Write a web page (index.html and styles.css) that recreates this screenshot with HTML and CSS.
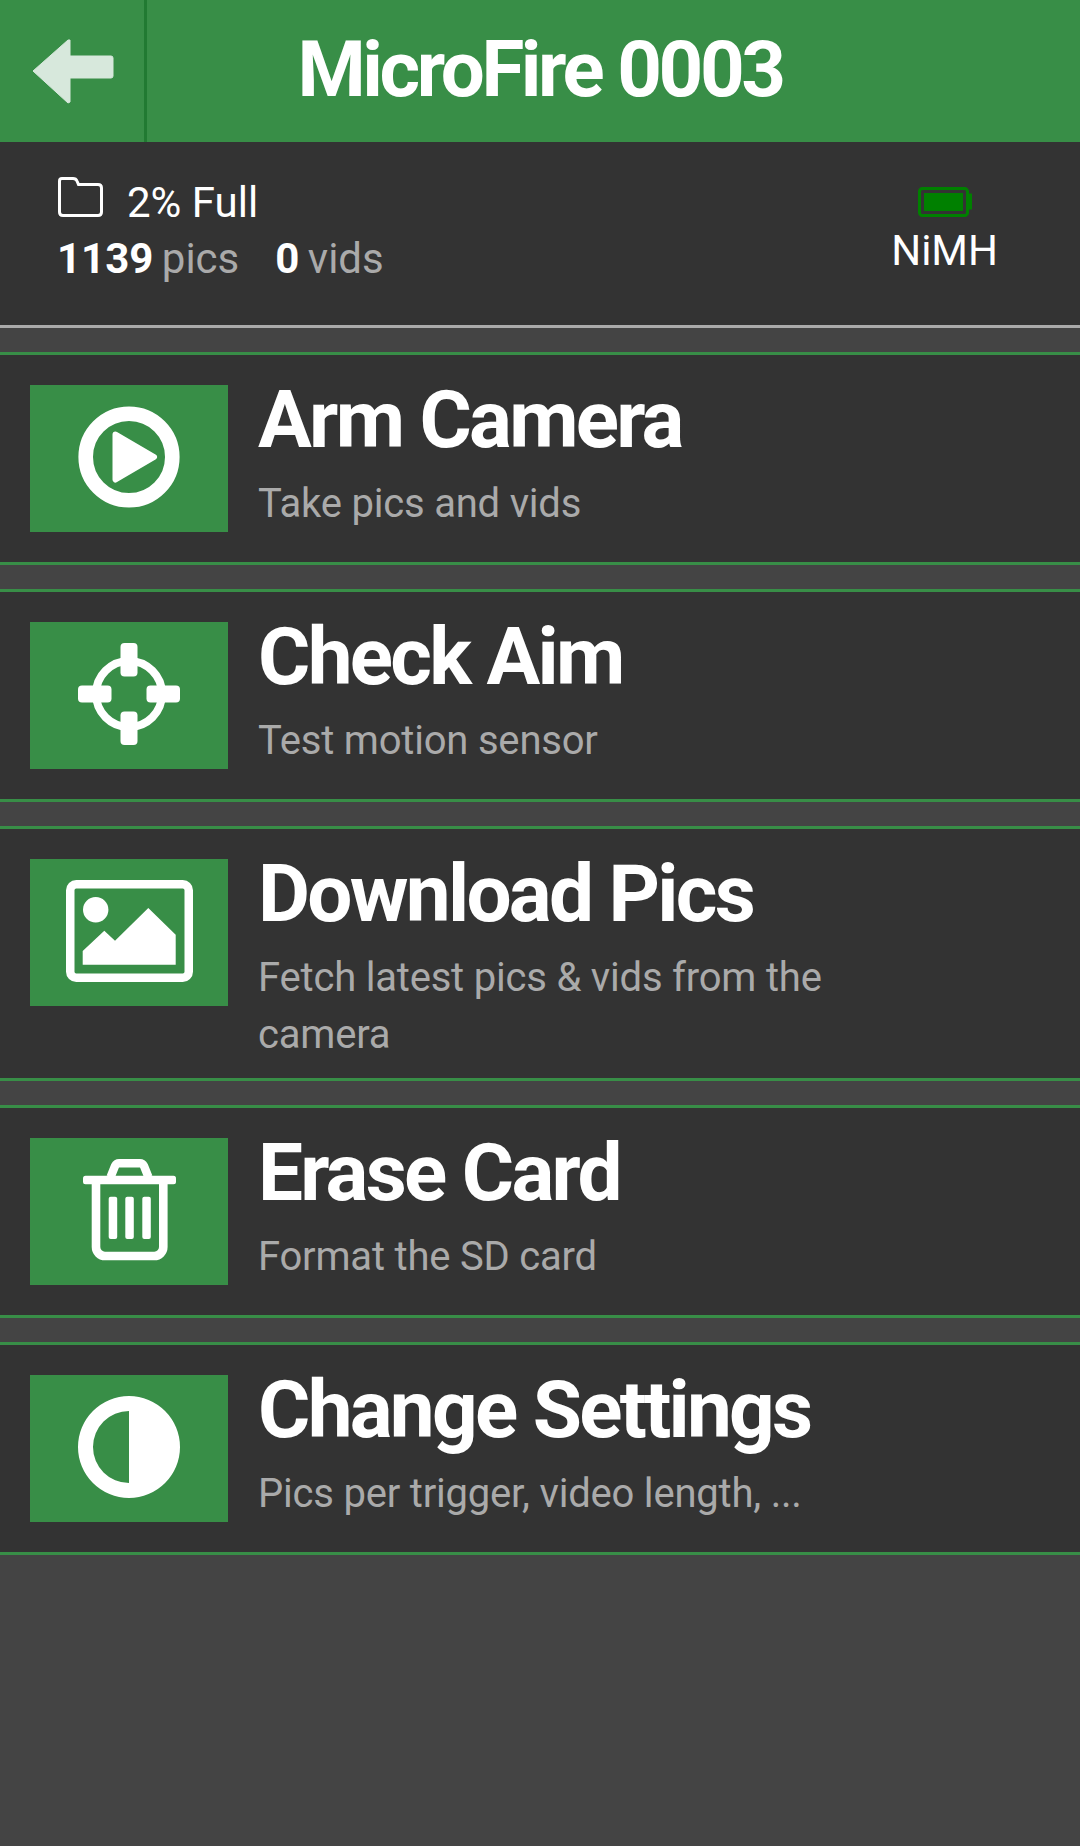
FILE: index.html

```html
<!DOCTYPE html>
<html lang="en">
<head>
    <meta charset="UTF-8">
    <meta name="viewport" content="width=device-width, initial-scale=1.0">
    <title>MicroFire 0003</title>
    <link rel="stylesheet" href="styles.css">
</head>
<body>
    <div class="header">
        <div class="back">
            <svg width="82" height="65" viewBox="0 0 82 65">
                <path d="M38 1 V17 H79 Q81 17 81 19 V37 Q81 39 79 39 H38 V63 L36 64 L1 32 L36 1 Z" fill="#d7e8dc" stroke="#d7e8dc" stroke-linejoin="round"/>
            </svg>
        </div>
        <h1 class="title">MicroFire 0003</h1>
    </div>

    <div class="info">
        <div class="info-left">
            <div class="storage">
                <svg class="folder" width="45" height="40" viewBox="0 0 45 40">
                    <path d="M4 1.5 H15 Q18 1.5 19 4 L20.5 7.5 H40 Q43.5 7.5 43.5 11 V35 Q43.5 38.5 40 38.5 H5 Q1.5 38.5 1.5 35 V4 Q1.5 1.5 4 1.5 Z" fill="none" stroke="#fff" stroke-width="3"/>
                </svg>
                <span class="storage-text">2% Full</span>
            </div>
            <div class="counts">
                <span class="count"><strong>1139</strong> pics</span>
                <span class="count"><strong>0</strong> vids</span>
            </div>
        </div>
        <div class="info-right">
            <svg width="54" height="30" viewBox="0 0 54 30">
                <rect x="1.5" y="1.5" width="48" height="27" rx="3" fill="none" stroke="#008000" stroke-width="3"/>
                <path d="M51 8 H52.5 V21 H51" fill="none" stroke="#008000" stroke-width="3"/>
                <rect x="6" y="6" width="39" height="18" fill="#008000"/>
            </svg>
            <div class="battery-type">NiMH</div>
        </div>
    </div>

    <div class="item">
        <div class="item-icon">
            <svg width="102" height="102" viewBox="0 0 102 102">
                <circle cx="51" cy="51" r="43.3" fill="none" stroke="#fff" stroke-width="14.6"/>
                <path d="M37.5 28.5 L76 51 L37.5 73.5 Z" fill="#fff" stroke="#fff" stroke-width="6" stroke-linejoin="round"/>
            </svg>
        </div>
        <div class="item-text">
            <div class="item-title">Arm Camera</div>
            <div class="item-sub">Take pics and vids</div>
        </div>
    </div>

    <div class="item">
        <div class="item-icon">
            <svg width="102" height="102" viewBox="0 0 102 102">
                <circle cx="51" cy="51" r="33" fill="none" stroke="#fff" stroke-width="8"/>
                <rect x="42.5" y="0" width="17" height="33.5" rx="4" fill="#fff"/>
                <rect x="42.5" y="68.5" width="17" height="33.5" rx="4" fill="#fff"/>
                <rect x="0" y="42.5" width="33.5" height="17" rx="4" fill="#fff"/>
                <rect x="68.5" y="42.5" width="33.5" height="17" rx="4" fill="#fff"/>
            </svg>
        </div>
        <div class="item-text">
            <div class="item-title">Check Aim</div>
            <div class="item-sub">Test motion sensor</div>
        </div>
    </div>

    <div class="item">
        <div class="item-icon">
            <svg width="127" height="102" viewBox="0 0 127 102">
                <rect x="4.25" y="4.25" width="118.5" height="93.5" rx="6" fill="none" stroke="#fff" stroke-width="8.5"/>
                <circle cx="29.7" cy="29.7" r="12.7" fill="#fff"/>
                <path d="M16.7 71 L38.3 50.7 L49 60.7 L82.3 28 L109.7 54.7 V84.7 H16.7 Z" fill="#fff"/>
            </svg>
        </div>
        <div class="item-text">
            <div class="item-title">Download Pics</div>
            <div class="item-sub">Fetch latest pics &amp; vids from the camera</div>
        </div>
    </div>

    <div class="item">
        <div class="item-icon">
            <svg width="93" height="102" viewBox="0 0 93 102">
                <path d="M27.6 18 L32 7 Q33.5 4.3 36 4.3 H57 Q59.5 4.3 61 7 L65.4 18" fill="none" stroke="#fff" stroke-width="8.5"/>
                <rect x="0" y="16.7" width="93" height="8.6" rx="2.5" fill="#fff"/>
                <path d="M13 22 V88 A9 9 0 0 0 22 97 H71.3 A9 9 0 0 0 80.3 88 V22" fill="none" stroke="#fff" stroke-width="8.6"/>
                <rect x="25.7" y="37.7" width="8.5" height="42.3" rx="2" fill="#fff"/>
                <rect x="42.3" y="37.7" width="8.5" height="42.3" rx="2" fill="#fff"/>
                <rect x="59.3" y="37.7" width="8.5" height="42.3" rx="2" fill="#fff"/>
            </svg>
        </div>
        <div class="item-text">
            <div class="item-title">Erase Card</div>
            <div class="item-sub">Format the SD card</div>
        </div>
    </div>

    <div class="item">
        <div class="item-icon">
            <svg width="102" height="102" viewBox="0 0 102 102">
                <path fill-rule="evenodd" d="M51 0 A51 51 0 0 1 51 102 A51 51 0 0 1 51 0 Z M51 15 A36 36 0 0 0 51 87 Z" fill="#fff"/>
            </svg>
        </div>
        <div class="item-text">
            <div class="item-title">Change Settings</div>
            <div class="item-sub">Pics per trigger, video length, ...</div>
        </div>
    </div>
</body>
</html>
```

FILE: styles.css

```css
body {
    font-family: Roboto, "Liberation Sans", sans-serif;
    background-color: #444;
    margin: 0;
    padding: 0;
    min-height: 100vh;
    color: #fff;
}

.header {
    display: flex;
    height: 142px;
    background-color: #388e47;
}

.back {
    box-sizing: border-box;
    flex: none;
    width: 147px;
    padding: 39px 0 0 32px;
    border-right: 3px solid #217a32;
}

.title {
    flex: 1;
    margin: 0;
    padding-right: 147px;
    text-align: center;
    font-size: 78px;
    font-weight: 700;
    line-height: 140px;
    letter-spacing: -3.4px;
}

.info {
    box-sizing: border-box;
    display: flex;
    justify-content: space-between;
    height: 186px;
    padding: 35px 82px 0 58px;
    background-color: #333;
    border-bottom: 3px solid #aaa;
    font-size: 42px;
}

.storage {
    display: flex;
    gap: 24px;
    height: 40px;
}

.storage-text {
    line-height: 52px;
}

.counts {
    display: flex;
    gap: 36px;
    margin: 14px 0 0 -1px;
    color: #aaa;
    line-height: 56px;
    word-spacing: -2px;
}

.counts strong {
    color: #fff;
}

.info-right {
    display: flex;
    flex-direction: column;
    align-items: center;
    padding-top: 10px;
}

.info-right svg {
    display: block;
}

.battery-type {
    line-height: 56px;
    margin-top: 6px;
}

.item {
    display: flex;
    gap: 30px;
    margin-top: 24px;
    padding: 30px 30px 15px;
    background-color: #333;
    border-top: 3px solid #388e47;
    border-bottom: 3px solid #388e47;
}

.item-icon {
    box-sizing: border-box;
    flex: none;
    display: flex;
    justify-content: center;
    align-items: flex-start;
    width: 198px;
    height: 147px;
    margin-bottom: 15px;
    padding-top: 21px;
    background-color: #388e47;
}

.item-text {
    max-width: 620px;
}

.item-title {
    margin-bottom: 20px;
    font-size: 80px;
    font-weight: 700;
    line-height: 70px;
    letter-spacing: -2.7px;
}

.item-sub {
    font-size: 40px;
    line-height: 57px;
    letter-spacing: -0.2px;
    color: #aaa;
}
```
